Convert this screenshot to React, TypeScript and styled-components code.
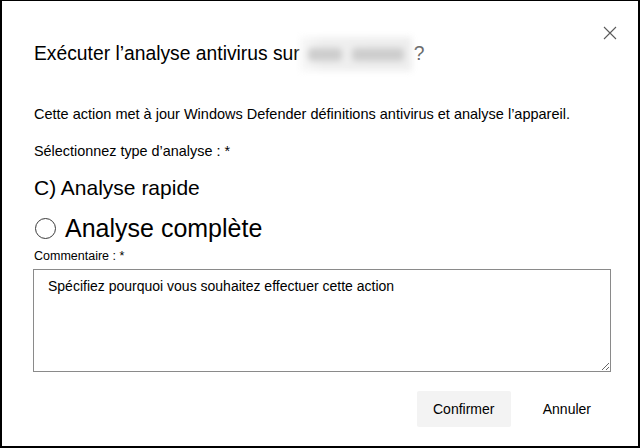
import styled, { createGlobalStyle } from "styled-components";

const GlobalStyle = createGlobalStyle`
  html, body {
    margin: 0;
    padding: 0;
    background: #ffffff;
  }
  * {
    box-sizing: border-box;
  }
`;

export default function App() {
  return (
    <>
      <GlobalStyle />
      <Dialog>
        <Header>
          <Title>
            Exécuter l’analyse antivirus sur
            <BlurredName>
              <Smudge $w={38} />
              <Smudge $w={58} />
            </BlurredName>
            <Question>?</Question>
          </Title>
          <CloseButton aria-label="Fermer">
            <svg width="14" height="14" viewBox="0 0 14 14">
              <path d="M1 1 L13 13 M13 1 L1 13" stroke="#5a5a5a" strokeWidth="1.1" fill="none" />
            </svg>
          </CloseButton>
        </Header>

        <Description>
          Cette action met à jour Windows Defender définitions antivirus et analyse l’appareil.
        </Description>

        <FieldLabel>Sélectionnez type d’analyse : *</FieldLabel>
        <QuickOption>C) Analyse rapide</QuickOption>
        <RadioRow>
          <RadioCircle />
          <RadioText>Analyse complète</RadioText>
        </RadioRow>

        <CommentLabel>Commentaire : *</CommentLabel>
        <Comment defaultValue="Spécifiez pourquoi vous souhaitez effectuer cette action" />

        <Footer>
          <Button $primary>Confirmer</Button>
          <Button>Annuler</Button>
        </Footer>
      </Dialog>
    </>
  );
}

const Dialog = styled.div`
  width: 640px;
  height: 448px;
  border: 2px solid #000000;
  border-top-width: 1px;
  background: #ffffff;
  display: flex;
  flex-direction: column;
  padding: 25px 27px 0 31px;
  font-family: "Liberation Sans", Arial, sans-serif;
  color: #000000;
`;

const Header = styled.div`
  display: flex;
  justify-content: space-between;
  align-items: flex-start;
`;

const Title = styled.h1`
  margin: 11px 0 0 1px;
  font-size: 19.3px;
  font-weight: 400;
  line-height: 26px;
  display: flex;
  align-items: center;
  white-space: nowrap;
`;

const BlurredName = styled.span`
  display: inline-flex;
  align-items: center;
  gap: 10px;
  width: 112px;
  height: 34px;
  padding: 0 8px;
  background: linear-gradient(90deg, #f8f8f8 0%, #efefef 20%, #eeeeee 100%);
  filter: blur(3px);
`;

const Smudge = styled.span<{ $w: number }>`
  display: block;
  width: ${(p) => p.$w}px;
  height: 13px;
  background: #cdcdcd;
  border-radius: 4px;
`;

const Question = styled.span`
  color: #6b6b6b;
  margin-left: 2px;
`;

const CloseButton = styled.button`
  border: none;
  background: transparent;
  padding: 0;
  margin: 0 -6px 0 0;
  width: 14px;
  height: 14px;
  display: flex;
  cursor: pointer;
`;

const Description = styled.p`
  margin: 33px 0 0 1px;
  font-size: 14.5px;
  line-height: 20px;
`;

const FieldLabel = styled.div`
  margin: 17px 0 0 1px;
  font-size: 14.4px;
  line-height: 20px;
`;

const QuickOption = styled.div`
  margin: 13px 0 0 1px;
  font-size: 21px;
  line-height: 28px;
`;

const RadioRow = styled.div`
  display: flex;
  align-items: center;
  gap: 9px;
  margin-top: 10px;
  height: 32px;
`;

const RadioCircle = styled.span`
  width: 21px;
  height: 21px;
  margin-left: 2px;
  border: 1px solid #3a3a3a;
  border-radius: 50%;
  flex-shrink: 0;
`;

const RadioText = styled.span`
  font-size: 25px;
  line-height: 32px;
`;

const CommentLabel = styled.div`
  margin: 4px 0 0 1px;
  font-size: 12.5px;
  line-height: 16px;
`;

const Comment = styled.textarea`
  margin-top: 5px;
  width: 578px;
  height: 103px;
  border: 1px solid #8a8a8a;
  border-radius: 0;
  padding: 6px 14px;
  font-family: "Liberation Sans", Arial, sans-serif;
  font-size: 14px;
  line-height: 20px;
  color: #000000;
  resize: vertical;
  outline: none;
`;

const Footer = styled.div`
  display: flex;
  justify-content: flex-end;
  gap: 12px;
  margin-top: 19px;
`;

const Button = styled.button<{ $primary?: boolean }>`
  width: ${(p) => (p.$primary ? "94px" : "auto")};
  height: 36px;
  padding: ${(p) => (p.$primary ? "0" : "0 20px")};
  border: none;
  border-radius: 2px;
  background: ${(p) => (p.$primary ? "#f3f3f3" : "transparent")};
  font-family: "Liberation Sans", Arial, sans-serif;
  font-size: 14px;
  color: #000000;
  cursor: pointer;
`;
